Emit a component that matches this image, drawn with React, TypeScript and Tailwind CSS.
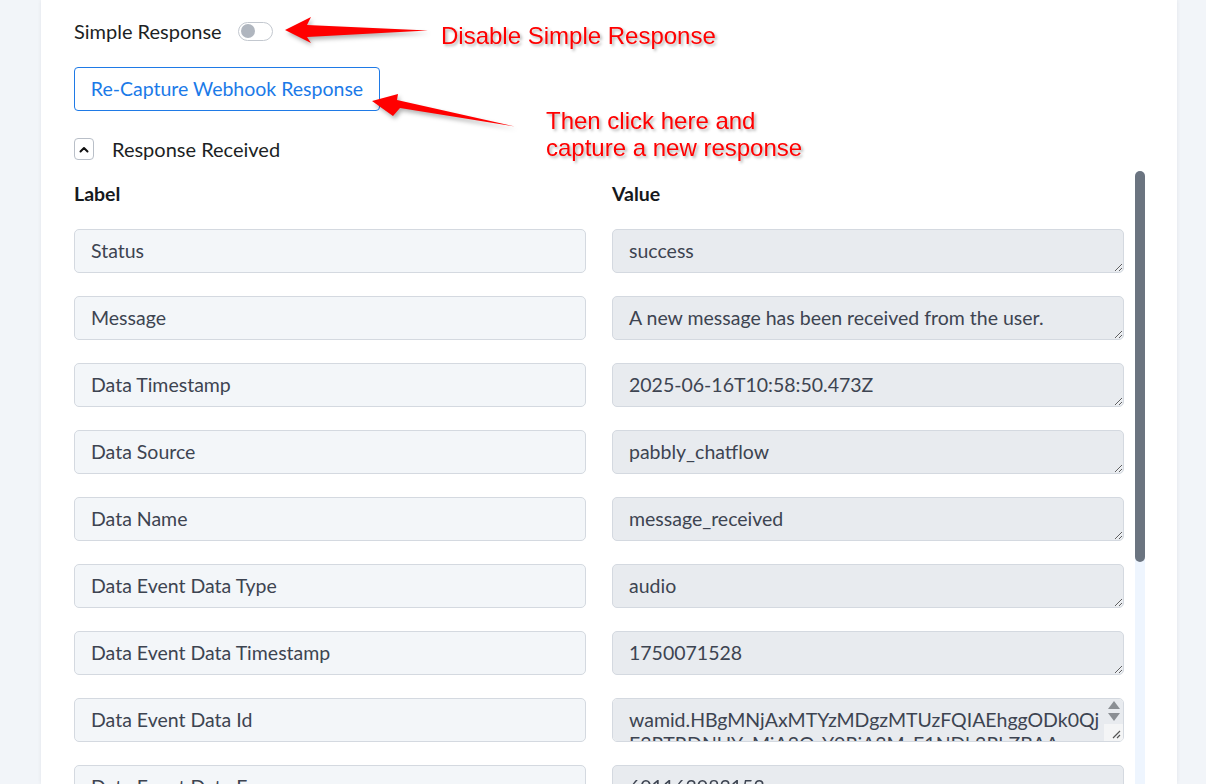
const rows: { label: string; value: string; overflow?: boolean }[] = [
  { label: "Status", value: "success" },
  { label: "Message", value: "A new message has been received from the user." },
  { label: "Data Timestamp", value: "2025-06-16T10:58:50.473Z" },
  { label: "Data Source", value: "pabbly_chatflow" },
  { label: "Data Name", value: "message_received" },
  { label: "Data Event Data Type", value: "audio" },
  { label: "Data Event Data Timestamp", value: "1750071528" },
  {
    label: "Data Event Data Id",
    value: "wamid.HBgMNjAxMTYzMDgzMTUzFQIAEhggODk0QjE3RTRDNUYxMjA2QzY0RjA3MzE1NDk3RkZBAA==",
    overflow: true,
  },
  { label: "Data Event Data From", value: "601163083153" },
  { label: "Data Event Data Audio Id", value: "1398524561345217" },
  { label: "Data Event Data Audio Mime Type", value: "audio/ogg; codecs=opus" },
  { label: "Data Event Data Audio Voice", value: "true" },
  { label: "Data Event Data Contact Name", value: "Customer" },
];

// little native-looking scroller shown inside a textarea whose text wraps
const TextareaScroller = () => (
  <div className="absolute right-px top-px bottom-px w-[19px] flex flex-col items-center rounded-r-[4px] overflow-hidden">
    <div className="flex-1 flex flex-col items-center justify-center gap-[4px] pb-[2px]">
      <svg width="12" height="8" viewBox="0 0 12 8">
        <polygon points="6,0 12,8 0,8" fill="#8b8f94" />
      </svg>
      <svg width="12" height="8" viewBox="0 0 12 8">
        <polygon points="0,0 12,0 6,8" fill="#8b8f94" />
      </svg>
    </div>
    <div className="w-full h-[17px] bg-[#f4f5f6] flex items-end justify-end p-[2px]">
      <svg width="9" height="9" viewBox="0 0 9 9">
        <path d="M8 1 1 8M8 5 5 8" stroke="#555" strokeWidth="1.2" />
      </svg>
    </div>
  </div>
);

const ResponseRow = ({ label, value, overflow }: { label: string; value: string; overflow?: boolean }) => (
  <div className="grid grid-cols-[512px_512px] gap-x-[26px]">
    <div className="h-[44px] flex items-center px-4 rounded-[5px] border border-[#d4d9e0] bg-[#f3f6f9] text-[19.5px] text-[#3d4451]">
      {label}
    </div>
    <div className="relative">
      <textarea
        readOnly
        value={value}
        className={`block h-[44px] w-full rounded-[5px] border border-[#d4d9e0] bg-[#e8ebef] pl-4 py-[9px] text-[19.5px] leading-[24px] text-[#3d4451] outline-none ${overflow ? "pr-[22px] resize-none" : "pr-4"}`}
      />
      {overflow && <TextareaScroller />}
    </div>
  </div>
);

export default function App() {
  return (
    <div className="relative h-screen overflow-hidden bg-[#f2f5f9] font-['Lato',sans-serif]">
      <div className="ml-[41px] w-[1136px] h-full bg-white shadow-[0_0_4px_rgba(15,23,42,0.07)] pl-[33px] pt-[19px]">
        {/* simple response toggle */}
        <div className="flex items-center h-6">
          <span className="text-[20px] text-[#1c1f24]">Simple Response</span>
          <span className="ml-4 flex items-center w-[35px] h-[19px] rounded-full border border-[#c3c8cf] bg-white px-[2px]">
            <span className="w-[14px] h-[14px] rounded-full bg-[#b0b6bf]" />
          </span>
        </div>

        <button className="mt-6 h-[44px] w-[306px] rounded-[4px] border border-[#1f7ae6] text-[19.5px] text-[#1b7ae8] bg-white">
          Re-Capture Webhook Response
        </button>

        <div className="mt-[27px] flex items-center h-[22px]">
          <span className="w-[20px] h-[22px] flex items-center justify-center rounded-[4px] border border-[#b9bfc8]">
            <svg width="10" height="7" viewBox="0 0 10 7" fill="none">
              <path d="M1.5 5.5 5 2l3.5 3.5" stroke="#111" strokeWidth="2" strokeLinecap="round" strokeLinejoin="round" />
            </svg>
          </span>
          <span className="ml-[18px] text-[20px] text-[#1c1f24]">Response Received</span>
        </div>

        {/* response fields with their scroll track */}
        <div className="mt-[11px] h-[613px] w-[1071px] flex gap-[11px] overflow-hidden">
          <div className="w-[1050px] pt-3 pb-14 flex flex-col">
            <div className="grid grid-cols-[512px_512px] gap-x-[26px] text-[19.5px] font-bold leading-[22px] text-[#16191d] mb-6">
              <span>Label</span>
              <span>Value</span>
            </div>
            <div className="flex flex-col gap-[23px]">
              {rows.map((r) => (
                <ResponseRow key={r.label} label={r.label} value={r.value} overflow={r.overflow} />
              ))}
            </div>
          </div>
          <div className="w-[10px] h-full bg-[#eef5fe] rounded-t-full">
            <div className="h-[391px] rounded-full bg-[#6b7480]" />
          </div>
        </div>
      </div>

      {/* annotation arrows */}
      <svg
        className="absolute inset-0 pointer-events-none drop-shadow-[2px_3px_2px_rgba(0,0,0,0.3)]"
        width="1206"
        height="784"
        viewBox="0 0 1206 784"
      >
        <polygon points="285,30 311,17 307,25 428,30.5 307,37 311,43" fill="#ff0000" />
        <polygon points="372,101 398,94 397,100 515,126.5 400,108 393,116" fill="#ff0000" />
      </svg>
      <div className="absolute left-[441px] top-[22px] text-[24px] leading-[28px] text-[#ff0000] font-['Liberation_Sans',Arial,sans-serif] [text-shadow:2px_2px_3px_rgba(0,0,0,0.3)]">
        Disable Simple Response
      </div>
      <div className="absolute left-[546px] top-[107px] text-[24px] leading-[27px] text-[#ff0000] font-['Liberation_Sans',Arial,sans-serif] [text-shadow:2px_2px_3px_rgba(0,0,0,0.3)]">
        Then click here and
        <br />
        capture a new response
      </div>
    </div>
  );
}
